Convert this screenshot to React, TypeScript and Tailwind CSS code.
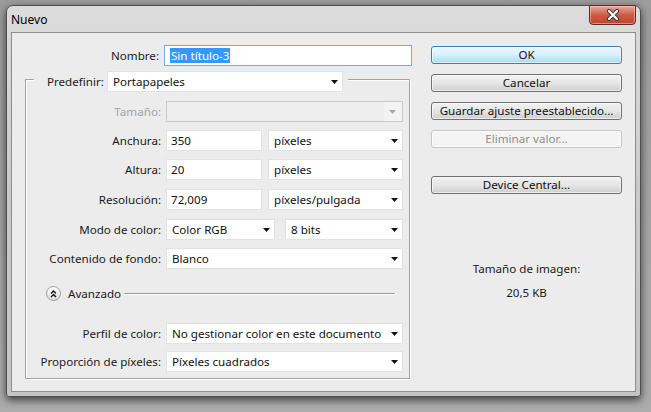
import React from "react";

const font = { fontFamily: '"Noto Sans", "Segoe UI", Tahoma, sans-serif' };

function Arrow({ disabled = false }: { disabled?: boolean }) {
  return (
    <svg width="7" height="4" viewBox="0 0 7 4" className="shrink-0">
      <path d="M0 0 H7 L3.5 4 Z" fill={disabled ? "#a8a8a8" : "#111"} />
    </svg>
  );
}

function Select({ value, w, disabled = false }: { value: string; w: string; disabled?: boolean }) {
  if (disabled) {
    return (
      <div className={`${w} h-[21px] flex border border-[#c9c9c9] bg-[#ededed]`}>
        <div className="flex-1" />
        <div className="w-[18px] flex items-center justify-center bg-[#f3f3f3] pr-[2px]">
          <Arrow disabled />
        </div>
      </div>
    );
  }
  return (
    <div className={`${w} h-[21px] flex items-center justify-between border border-[#e2e2e2] bg-white pl-[5px] pr-[4px] text-[11.6px] text-[#111] leading-none`}>
      <span className="whitespace-nowrap">{value}</span>
      <Arrow />
    </div>
  );
}

function Input({ value, w }: { value: string; w: string }) {
  return (
    <div className={`${w} h-[21px] flex items-center border border-[#e2e2e2] bg-white pl-[4px] text-[11.6px] text-[#111] leading-none`}>
      {value}
    </div>
  );
}

function Row({ label, children, mt, disabled = false }: { label: string; children: React.ReactNode; mt: string; disabled?: boolean }) {
  return (
    <div className={`flex items-center ${mt}`}>
      <div className={`w-[135px] text-right text-[11.6px] leading-none whitespace-nowrap ${disabled ? "text-[#a3a3a3]" : "text-[#1a1a1a]"}`}>
        {label}
      </div>
      <div className="ml-[5px] flex gap-[6px]">{children}</div>
    </div>
  );
}

function Button({ label, variant = "normal", mt }: { label: string; variant?: "normal" | "default" | "disabled"; mt: string }) {
  const cls =
    variant === "default"
      ? "border-[#3c7fb1] bg-gradient-to-b from-[#eaf6fd] via-[#d9f0fc] to-[#a7d9f5] text-[#111]"
      : variant === "disabled"
      ? "border-[#c2c6c9] bg-[#f4f4f4] text-[#8d8d8d]"
      : "border-[#707070] bg-gradient-to-b from-[#f2f2f2] via-[#e6e6e6] to-[#cfcfcf] text-[#111]";
  return (
    <div
      className={`${mt} w-[191px] h-[18px] rounded-[3px] border flex items-center justify-center text-[11.6px] leading-none shadow-[inset_0_0_0_1px_rgba(255,255,255,0.6)] ${cls}`}
    >
      {label}
    </div>
  );
}

export default function App() {
  return (
    <div className="w-[651px] h-[412px] bg-gradient-to-b from-[#9c9c9c] to-[#adadad] overflow-hidden" style={font}>
      <div className="ml-[6px] mt-[5px] w-[635px] h-[392px] rounded-t-[7px] rounded-b-[3px] border border-[#4f4f4f] bg-gradient-to-b from-[#dcdcdc] via-[#c9c9c9] to-[#c4c4c4] shadow-[0_3px_9px_rgba(0,0,0,0.65)] flex flex-col">
        {/* title bar */}
        <div className="h-[26px] flex items-start relative">
          <div className="ml-[4px] mt-[8px] text-[12px] leading-none text-black">Nuevo</div>
          <div className="absolute right-[4px] top-[-1px] w-[47px] h-[20px] rounded-b-[4px] border border-[#5e2b23] bg-gradient-to-b from-[#e7a898] via-[#cc5a45] to-[#c44331] shadow-[inset_0_0_0_1px_rgba(255,210,200,0.5)] flex items-center justify-center">
            <svg width="16" height="12" viewBox="0 0 16 12">
              <path d="M4 2 L12 10 M12 2 L4 10" stroke="#3a3a3a" strokeWidth="4.2" strokeLinecap="round" />
              <path d="M4 2 L12 10 M12 2 L4 10" stroke="#ffffff" strokeWidth="2.2" strokeLinecap="round" />
            </svg>
          </div>
        </div>
        {/* client */}
        <div className="ml-[4px] w-[625px] h-[360px] border border-[#8d8d8d] bg-[#ececec] flex">
          {/* left column */}
          <div className="w-[402px] flex flex-col">
            <div className="flex items-center mt-[12px]">
              <div className="w-[147px] text-right text-[11.6px] leading-none text-[#1a1a1a]">Nombre:</div>
              <div className="ml-[5px] w-[248px] h-[21px] border border-[#7eaad8] bg-white flex items-center pl-[5px]">
                <span className="bg-[#3399ff] text-white text-[11.6px] leading-none px-[1px] py-[2px]">Sin título-3</span>
              </div>
            </div>
            {/* group box */}
            <div className="ml-[13px] mt-[13px] w-[385px] h-[300px] border border-[#a3a3a3] shadow-[1px_1px_0_#fff,inset_1px_1px_0_#fff] flex flex-col">
              <div className="flex -mt-[9px] ml-[8px]">
                <div className="flex items-center bg-[#ececec] pl-[13px] pr-[5px]">
                  <span className="w-[54px] whitespace-nowrap text-[11.6px] leading-none text-[#1a1a1a]">Predefinir:</span>
                  <div className="ml-[6px]">
                    <Select value="Portapapeles" w="w-[236px]" />
                  </div>
                </div>
              </div>
              <Row label="Tamaño:" mt="mt-[9px]" disabled>
                <Select value="" w="w-[237px]" disabled />
              </Row>
              <Row label="Anchura:" mt="mt-[8px]">
                <Input value="350" w="w-[96px]" />
                <Select value="píxeles" w="w-[135px]" />
              </Row>
              <Row label="Altura:" mt="mt-[8px]">
                <Input value="20" w="w-[96px]" />
                <Select value="píxeles" w="w-[135px]" />
              </Row>
              <Row label="Resolución:" mt="mt-[9px]">
                <Input value="72,009" w="w-[96px]" />
                <Select value="píxeles/pulgada" w="w-[135px]" />
              </Row>
              <Row label="Modo de color:" mt="mt-[9px]">
                <Select value="Color RGB" w="w-[109px]" />
                <div className="ml-[4px]">
                  <Select value="8 bits" w="w-[118px]" />
                </div>
              </Row>
              <Row label="Contenido de fondo:" mt="mt-[8px]">
                <Select value="Blanco" w="w-[237px]" />
              </Row>
              <div className="flex items-center mt-[17px] ml-[20px] mr-[14px]">
                <div className="w-[15px] h-[15px] rounded-full border border-[#9a9a9a] bg-gradient-to-b from-white to-[#dedede] flex items-center justify-center shrink-0">
                  <svg width="7" height="8" viewBox="0 0 7 8">
                    <path d="M1 3.5 L3.5 1 L6 3.5 M1 7 L3.5 4.5 L6 7" stroke="#111" strokeWidth="1.3" fill="none" />
                  </svg>
                </div>
                <span className="ml-[7px] w-[50px] whitespace-nowrap text-[11.6px] leading-none text-[#1a1a1a]">Avanzado</span>
                <div className="ml-[6px] flex-1 h-[1px] bg-[#9e9e9e] shadow-[0_1px_0_#fff]" />
              </div>
              <Row label="Perfil de color:" mt="mt-[22px]">
                <Select value="No gestionar color en este documento" w="w-[237px]" />
              </Row>
              <Row label="Proporción de píxeles:" mt="mt-[7px]">
                <Select value="Píxeles cuadrados" w="w-[237px]" />
              </Row>
            </div>
          </div>
          {/* right column */}
          <div className="ml-[17px] flex flex-col">
            <Button label="OK" variant="default" mt="mt-[13px]" />
            <Button label="Cancelar" mt="mt-[10px]" />
            <Button label="Guardar ajuste preestablecido..." mt="mt-[10px]" />
            <Button label="Eliminar valor..." variant="disabled" mt="mt-[10px]" />
            <Button label="Device Central..." mt="mt-[28px]" />
            <div className="mt-[69px] w-[191px] text-center text-[11.6px] leading-none text-[#1a1a1a]">Tamaño de imagen:</div>
            <div className="mt-[12px] w-[191px] text-center text-[11.6px] leading-none text-[#1a1a1a]">20,5 KB</div>
          </div>
        </div>
      </div>
    </div>
  );
}
